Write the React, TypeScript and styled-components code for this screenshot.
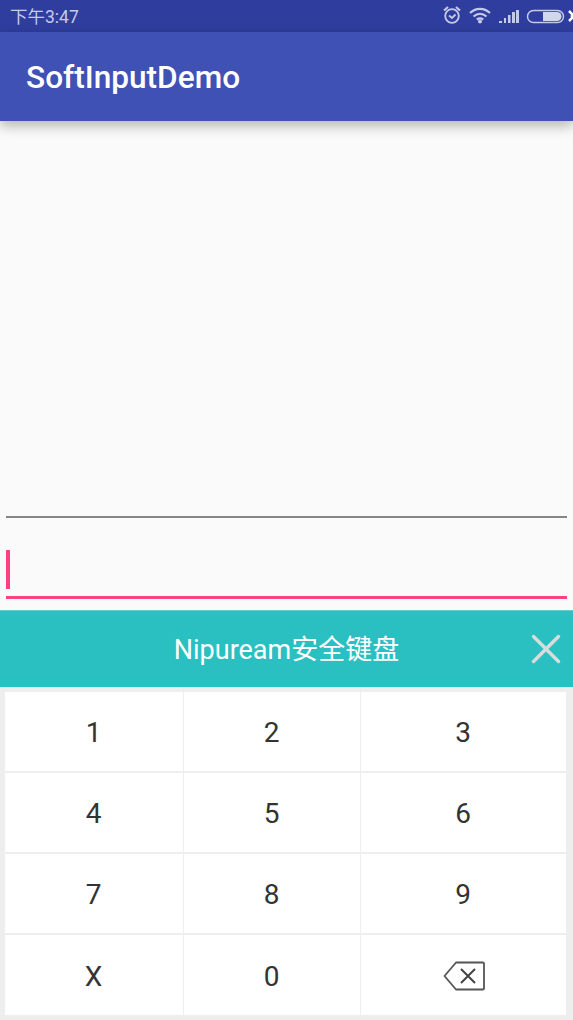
import React from 'react';
import styled, { createGlobalStyle } from 'styled-components';

const GlobalStyle = createGlobalStyle`
    html, body {
        margin: 0;
        padding: 0;
        background: #fafafa;
    }
    * {
        box-sizing: border-box;
    }
`;

const Screen = styled.div`
    width: 573px;
    height: 1020px;
    overflow: hidden;
    display: flex;
    flex-direction: column;
    background: #fafafa;
    font-family: Roboto, 'Noto Sans CJK SC', sans-serif;
`;

const StatusBar = styled.div`
    height: 32px;
    flex: none;
    display: flex;
    align-items: center;
    justify-content: space-between;
    padding: 0 0 0 10px;
    background: #2f3d9e;
    color: #c5cae9;
    font-size: 17.5px;
    position: relative;
    overflow: hidden;
`;

const StatusTime = styled.span`
    margin-top: -2px;
`;

const StatusIcons = styled.div`
    display: flex;
    align-items: center;
    height: 32px;
`;

const AppBar = styled.div`
    height: 89px;
    flex: none;
    display: flex;
    align-items: center;
    padding: 2px 0 0 26px;
    background: #3f51b5;
    color: #fff;
    font-size: 31.6px;
    font-weight: 500;
    box-shadow: 0 5px 12px rgba(0, 0, 0, 0.28);
    position: relative;
`;

const Body = styled.div`
    flex: 1;
    display: flex;
    flex-direction: column;
    justify-content: flex-end;
    padding: 0 6px 11px;
`;

const PlainField = styled.div`
    height: 2px;
    background: #858585;
    margin-bottom: 32px;
`;

const Cursor = styled.div`
    width: 4px;
    height: 39px;
    background: #ff4081;
    margin-bottom: 7px;
`;

const FocusLine = styled.div`
    height: 3px;
    background: #ff4081;
`;

const KeyboardHeader = styled.div`
    height: 77px;
    flex: none;
    position: relative;
    display: flex;
    align-items: center;
    justify-content: center;
    padding: 0 0 4px;
    background: #2ac0c1;
    border-top: 1px solid #63d0d2;
    color: #fff;
    font-size: 27px;
`;

const CloseButton = styled.svg`
    position: absolute;
    right: 12px;
    top: 23px;
    width: 30px;
    height: 30px;
`;

const KeyGrid = styled.div`
    height: 333px;
    flex: none;
    display: grid;
    grid-template-columns: 178px 176px 205px;
    grid-template-rows: 79px 79px 79px 80px;
    gap: 2px 1px;
    align-content: start;
    padding: 5px 7px 0 5px;
    background: #eeeeee;
`;

const Key = styled.div`
    display: flex;
    align-items: center;
    justify-content: center;
    padding: 2px 1px 0 0;
    background: #fff;
    color: #333;
    font-size: 28px;
`;

const BackspaceIcon = styled.svg`
    width: 42px;
    height: 30px;
    margin-left: 2px;
`;

const keys = ['1', '2', '3', '4', '5', '6', '7', '8', '9', 'X', '0'];

const App = () => (
    <Screen>
        <GlobalStyle />
        <StatusBar>
            <StatusTime>下午3:47</StatusTime>
            <StatusIcons>
                <svg width="143" height="32" viewBox="0 0 143 32">
                    {/* alarm */}
                    <g fill="none" stroke="#c5cae9" strokeWidth="1.8">
                        <circle cx="22" cy="16" r="6.8" />
                        <path d="M19 15.500l3 2.500 3.500-3.500" />
                        <path d="M14 10.500l4-3.500M30 10.500l-4-3.500" strokeWidth="2.200" />
                    </g>
                    {/* wifi */}
                    <g fill="none" stroke="#c5cae9" strokeWidth="2.200">
                        <path d="M40 13c6-5.500 14-5.500 20 0" />
                        <path d="M43.500 16.500c4-3.500 9-3.500 13 0" />
                        <path d="M46.800 19.500c2-1.500 4.400-1.500 6.400 0" />
                    </g>
                    <circle cx="50" cy="21.500" r="2" fill="#c5cae9" />
                    {/* signal */}
                    <path d="M69 23h3v-2h-3zM74 23h2v-5h-2zM78 23h2.500v-8H78zM82 23h3v-11h-3zM86 23h3V10h-3z" fill="#c5cae9" />
                    {/* battery */}
                    <rect x="97.500" y="10.500" width="36" height="12" rx="6" fill="none" stroke="#c5cae9" strokeWidth="1.500" />
                    <path d="M113 12h14a4.500 4.500 0 0 1 0 9h-14z" fill="#d3d7ee" />
                    {/* charging mark, cut by the screen edge */}
                    <path d="M139 11l5 5-5 5M147 11l-5 5 5 5" fill="none" stroke="#fff" strokeWidth="2.500" />
                </svg>
            </StatusIcons>
        </StatusBar>
        <AppBar>SoftInputDemo</AppBar>
        <Body>
            <PlainField />
            <Cursor />
            <FocusLine />
        </Body>
        <KeyboardHeader>
            Nipuream安全键盘
            <CloseButton viewBox="0 0 30 30">
                <path d="M2.500 2.500l25 25M27.500 2.500l-25 25" stroke="#d8dcdc" strokeWidth="3.500" strokeLinecap="round" />
            </CloseButton>
        </KeyboardHeader>
        <KeyGrid>
            {keys.map(label => (
                <Key key={label}>{label}</Key>
            ))}
            <Key>
                <BackspaceIcon viewBox="0 0 42 30">
                    <path
                        d="M13 1.500h27a1 1 0 0 1 1 1v25a1 1 0 0 1-1 1H13L1.500 15z"
                        fill="none"
                        stroke="#555"
                        strokeWidth="1.800"
                        strokeLinejoin="round"
                    />
                    <path d="M18 8l14 14M32 8L18 22" stroke="#444" strokeWidth="2" />
                </BackspaceIcon>
            </Key>
        </KeyGrid>
    </Screen>
);

export default App;
